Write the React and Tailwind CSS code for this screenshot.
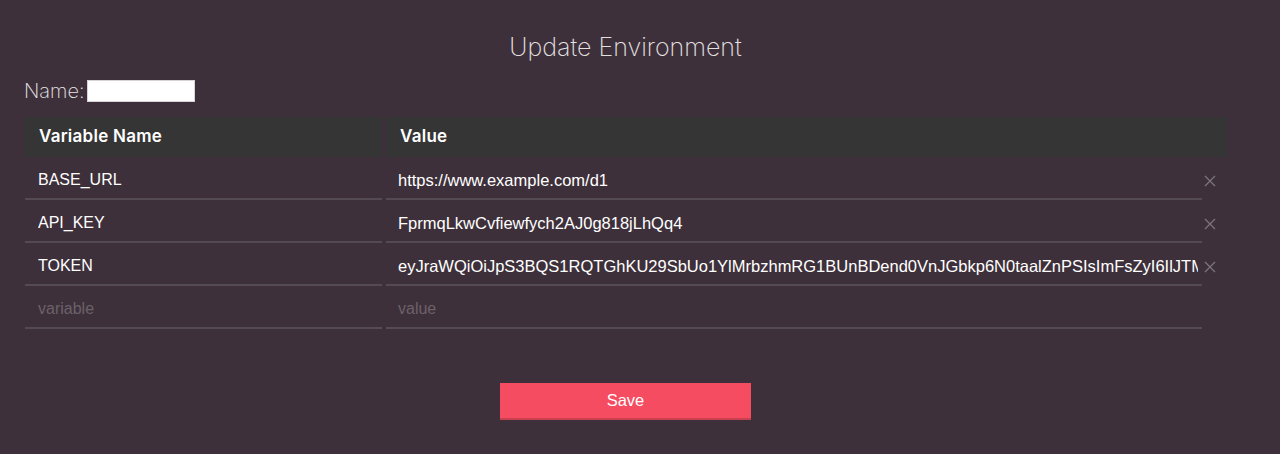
import { useState } from "react";

const initialRows = [
  { name: "BASE_URL", value: "https://www.example.com/d1" },
  { name: "API_KEY", value: "FprmqLkwCvfiewfych2AJ0g818jLhQq4" },
  {
    name: "TOKEN",
    value:
      "eyJraWQiOiJpS3BQS1RQTGhKU29SbUo1YlMrbzhmRG1BUnBDend0VnJGbkp6N0taalZnPSIsImFsZyI6IlJTMjU2In0",
  },
];

const App = () => {
  const [rows, setRows] = useState(initialRows);
  const [envName, setEnvName] = useState("");

  const removeRow = (index) => setRows(rows.filter((_, i) => i !== index));

  return (
    <div className="min-h-[454px] w-full bg-[#3e303a] font-['Liberation_Sans',Arial,sans-serif] text-white">
      <div className="w-[1227px] pl-6 pt-[31px]">
        <h1 className="text-center font-['Inter',sans-serif] text-[25px] font-extralight leading-8 text-[#e4e0e2]">
          Update Environment
        </h1>

        <div className="mt-[16px] flex items-center">
          <label className="font-['Inter',sans-serif] text-[20px] font-extralight leading-6 text-[#ebe7e9]">
            Name:
          </label>
          <input
            value={envName}
            onChange={(e) => setEnvName(e.target.value)}
            className="ml-[2px] h-[22px] w-[108px] border border-[#d8d4d6] bg-white px-1 text-sm text-black outline-none"
          />
        </div>

        {/* header */}
        <div className="mt-[14px] flex w-[1203px] gap-[4px]">
          <div className="flex h-[40px] w-[358px] items-center bg-[#353535] px-[15px] font-['Inter',sans-serif] text-[17px] font-semibold tracking-[0.015em]">
            Variable Name
          </div>
          <div className="flex h-[40px] flex-1 items-center bg-[#353535] px-[14px] font-['Inter',sans-serif] text-[17px] font-semibold tracking-[0.015em]">
            Value
          </div>
        </div>

        {/* rows */}
        {rows.map((row, i) => (
          <div key={row.name} className="flex w-[1203px] items-center">
            <input
              defaultValue={row.name}
              className="ml-px h-[43px] w-[357px] border-b-2 border-[#544a51] bg-transparent pl-[13px] pt-[5px] text-[16px] text-white outline-none"
            />
            <input
              defaultValue={row.value}
              className="ml-[4px] h-[43px] w-[816px] border-b-2 border-[#544a51] bg-transparent pl-[12px] pr-[4px] pt-[5px] text-[16.5px] text-white outline-none"
            />
            <button
              onClick={() => removeRow(i)}
              className="flex h-[43px] flex-1 items-center justify-start pl-[2px] pt-[5px] text-[#7d767b]"
            >
              <svg width="12" height="12" viewBox="0 0 12 12" stroke="currentColor" strokeWidth="1.2">
                <path d="M1 1L11 11M11 1L1 11" />
              </svg>
            </button>
          </div>
        ))}

        <div className="flex w-[1203px] items-center">
          <input
            placeholder="variable"
            className="ml-px h-[43px] w-[357px] border-b-2 border-[#544a51] bg-transparent pl-[13px] pt-[5px] text-[16px] text-white outline-none placeholder:text-[#6b6169]"
          />
          <input
            placeholder="value"
            className="ml-[4px] h-[43px] w-[816px] border-b-2 border-[#544a51] bg-transparent pl-[12px] pt-[5px] text-[16px] text-white outline-none placeholder:text-[#6b6169]"
          />
        </div>

        <div className="mt-[54px] flex justify-center">
          <button className="h-[37px] w-[251px] border-b-2 border-[#c9404f] bg-[#f54c61] text-[16.5px] text-white">
            Save
          </button>
        </div>
      </div>
    </div>
  );
};

export default App;
